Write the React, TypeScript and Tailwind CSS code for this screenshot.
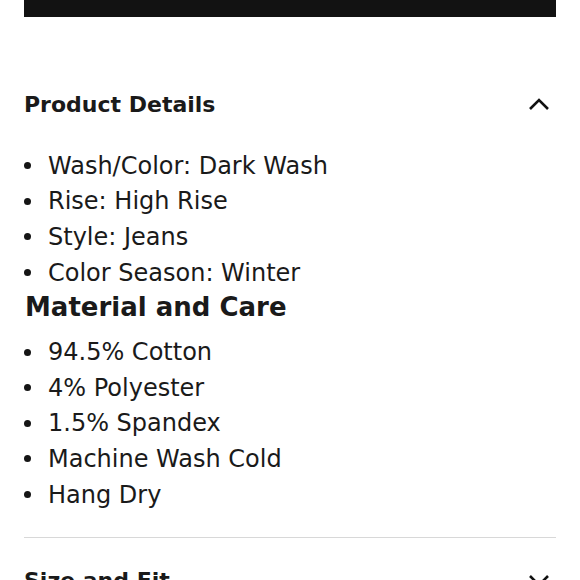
import React from "react";

const Chevron = ({ up }: { up?: boolean }) => (
  <svg width="22" height="14" viewBox="0 0 22 14" className="shrink-0">
    <path
      d={up ? "M2 12 L11 3 L20 12" : "M2 3 L11 12 L20 3"}
      fill="none"
      stroke="#111"
      strokeWidth="2.6"
    />
  </svg>
);

export default function App() {
  const details = [
    "Wash/Color: Dark Wash",
    "Rise: High Rise",
    "Style: Jeans",
    "Color Season: Winter",
  ];
  const care = [
    "94.5% Cotton",
    "4% Polyester",
    "1.5% Spandex",
    "Machine Wash Cold",
    "Hang Dry",
  ];
  const Item = ({ t }: { t: string }) => (
    <li className="flex items-center h-[35.6px]">
      <span className="shrink-0 w-[7px] h-[7px] rounded-full bg-[#151515] ml-[24px] mr-[17px]" />
      <span>{t}</span>
    </li>
  );
  return (
    <div className="w-[580px] h-[580px] overflow-hidden bg-white text-[#1a1a1a] [font-family:'DejaVu_Sans',sans-serif]">
      <div className="mx-[24px] h-[17px] bg-[#121212]" />
      <div className="mx-[24px] mt-[71px] flex items-center justify-between h-[32px]">
        <h2 className="text-[22px] font-bold">Product Details</h2>
        <div className="mr-[6px]"><Chevron up /></div>
      </div>
      <ul className="mt-[28px] text-[24px]">
        {details.map((t) => (
          <Item key={t} t={t} />
        ))}
      </ul>
      <h3 className="ml-[25px] text-[26px] font-extrabold h-[44px] leading-[34px]">
        Material and Care
      </h3>
      <ul className="text-[24px]">
        {care.map((t) => (
          <Item key={t} t={t} />
        ))}
      </ul>
      <div className="mx-[24px] mt-[25px] border-t border-[#d8d8d8]" />
      <div className="mx-[24px] mt-[26px] flex items-center justify-between h-[32px]">
        <h2 className="text-[22px] font-bold">Size and Fit</h2>
        <div className="mr-[6px]"><Chevron /></div>
      </div>
    </div>
  );
}
